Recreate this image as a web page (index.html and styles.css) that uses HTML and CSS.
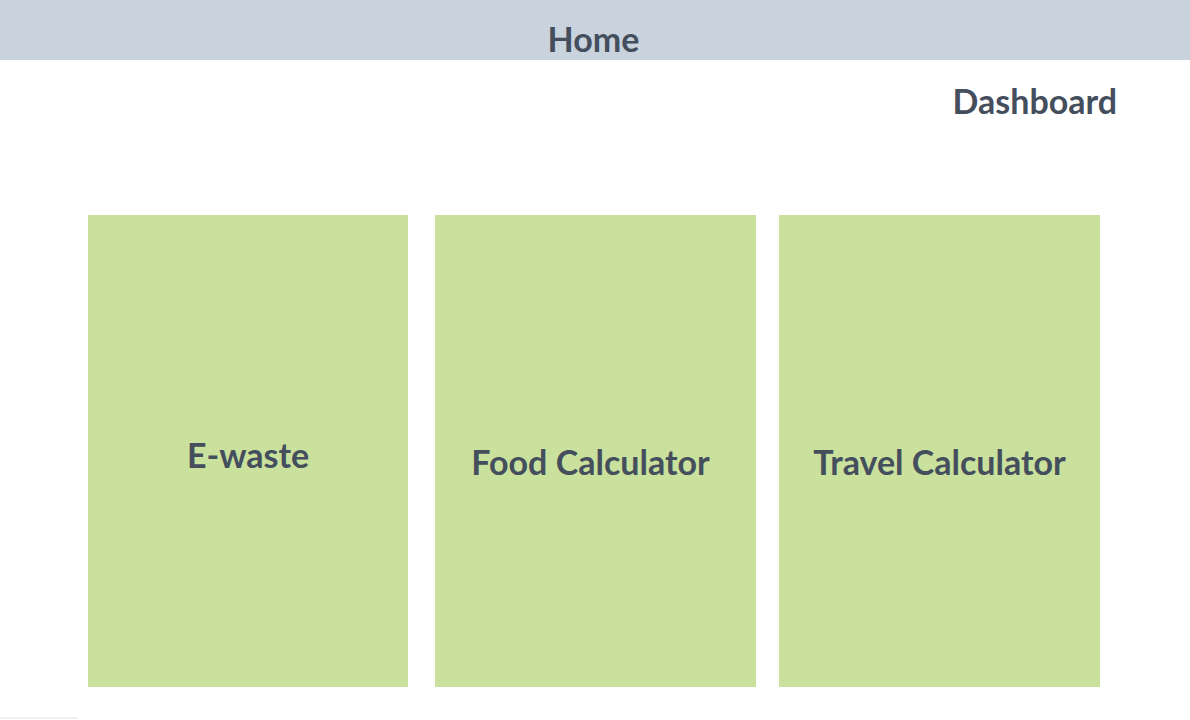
FILE: index.html
```html
<!DOCTYPE html>
<html lang="en">
<head>
  <meta charset="UTF-8">
  <title>Home</title>
  <link rel="stylesheet" href="styles.css">
</head>
<body>

  <header class="topbar">
    <h1>Home</h1>
  </header>

  <div class="dash-row">
    <h2 class="dash-title">Dashboard</h2>
  </div>

  <main class="cards">
    <div class="card card-ewaste"><span>E-waste</span></div>
    <div class="card card-food"><span>Food Calculator</span></div>
    <div class="card card-travel"><span>Travel Calculator</span></div>
  </main>

  <div class="bottom-line"></div>

</body>
</html>
```

FILE: styles.css
```css
   body {
     font-family: 'Lato', 'Liberation Sans', sans-serif;
     margin: 0;
     padding: 0;
     color: #444e5c;
     background: #fff;
     height: 720px;
     overflow: hidden;
     position: relative;
   }

   .topbar {
     background-color: #c8d3de;
     height: 60px;
     display: flex;
     justify-content: center;
     align-items: flex-end;
   }

   .topbar h1 {
     margin: 0 3px 0 0;
     font-size: 34px;
     font-weight: 700;
     line-height: 1;
     padding-bottom: 4px;
   }

   .dash-row {
     display: flex;
     justify-content: flex-end;
     padding: 21px 73px 0 0;
   }

   .dash-title {
     margin: 0;
     font-size: 34px;
     font-weight: 700;
     line-height: 40px;
   }

   .cards {
     display: flex;
     margin-top: 94px;
     padding-left: 88px;
   }

   .card {
     background-color: #c9e19c;
     width: 321px;
     height: 472px;
     box-sizing: border-box;
     padding-top: 20px;
     display: flex;
     justify-content: center;
     align-items: center;
     font-size: 34px;
     font-weight: 700;
   }

   .card-ewaste {
     width: 320px;
     padding-top: 6px;
   }

   .card-food {
     margin-left: 27px;
   }

   .card-food span {
     margin-right: 10px;
   }

   .card-travel {
     margin-left: 23px;
   }

   .bottom-line {
     position: absolute;
     left: 0;
     bottom: 1px;
     width: 78px;
     height: 2px;
     background: #f1f1f1;
   }
```
